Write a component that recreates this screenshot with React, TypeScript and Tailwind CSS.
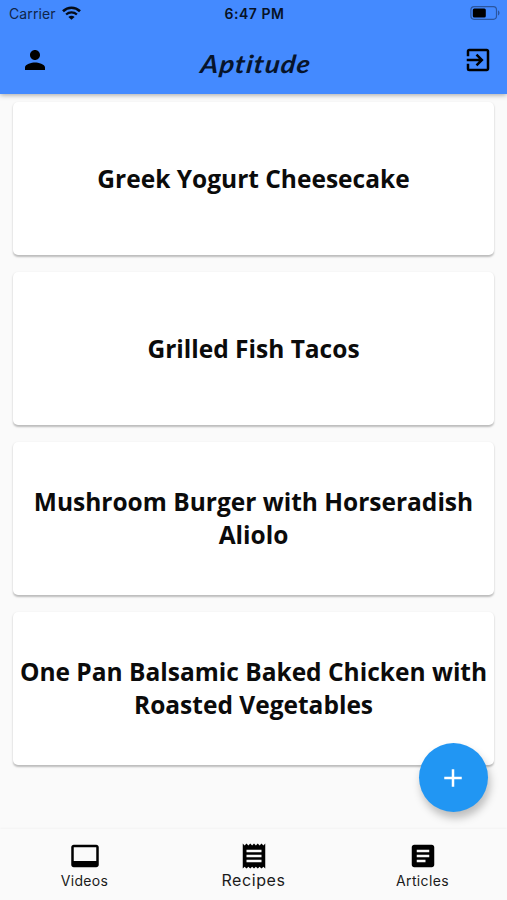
import type { ReactNode } from 'react';
import {
    MdAdd,
    MdArticle,
    MdExitToApp,
    MdPerson,
    MdReceipt,
    MdVideoLabel,
} from 'react-icons/md';

const recipes = [
    'Greek Yogurt Cheesecake',
    'Grilled Fish Tacos',
    'Mushroom Burger with Horseradish Aliolo',
    'One Pan Balsamic Baked Chicken with Roasted Vegetables',
];

function StatusBar() {
    return (
        <div className="flex h-[27px] items-center justify-between pl-[9px] pr-[7px]">
            <div className="flex flex-1 items-center gap-[6px]">
                <span className="text-[14px] leading-[27px] tracking-[0.1px] text-[#10254a]">Carrier</span>
                <svg className="-mt-[2px] h-[14px] w-[19px]" viewBox="0 0 19 14" fill="none">
                    <path d="M1 5.2C5.8.6 13.2.6 18 5.2" stroke="#050c18" strokeWidth="2.6" />
                    <path d="M4.1 8.5c3.1-2.9 7.7-2.9 10.8 0" stroke="#050c18" strokeWidth="2.3" />
                    <path d="M9.5 13.8 6.4 10.9c1.7-1.5 4.5-1.5 6.2 0z" fill="#050c18" />
                </svg>
            </div>
            <span className="text-[14px] font-semibold leading-[27px] tracking-[0.5px] text-[#071225]">
                6:47 PM
            </span>
            <div className="flex flex-1 justify-end">
                <svg className="-mt-[1px] h-[14px] w-[30px]" viewBox="0 0 30 14">
                    <rect x=".9" y=".7" width="25.6" height="12.6" rx="3.2" fill="none" stroke="#2b569f" strokeWidth="1.2" />
                    <rect x="2.8" y="2.6" width="13" height="8.8" rx="1.5" fill="#000" />
                    <path d="M28 4.6c2 .6 2 4.2 0 4.8z" fill="#2b569f" />
                </svg>
            </div>
        </div>
    );
}

function Header() {
    return (
        <header className="relative z-10 h-[94px] bg-[#448aff] shadow-[0_1px_5px_rgba(0,0,0,0.35)]">
            <StatusBar />
            <div className="flex h-[65px] items-center justify-between pl-5 pr-[14px]">
                <button aria-label="Profile">
                    <MdPerson size={30} />
                </button>
                <h1 className="mt-[6px] -skew-x-6 scale-x-110 font-['Segoe_Print','Bradley_Hand','Lato',cursive] text-[25px] font-bold italic leading-8 tracking-[0.9px] text-[#07142b]">
                    Aptitude
                </h1>
                <button aria-label="Log out">
                    <MdExitToApp size={30} />
                </button>
            </div>
        </header>
    );
}

function RecipeCard({ title }: { title: string }) {
    return (
        <div className="flex h-[153px] items-center justify-center rounded-[5px] bg-white pb-[1px] text-center shadow-[0_1.5px_2px_rgba(0,0,0,0.25)]">
            <h2 className="font-['Open_Sans',sans-serif] text-[24.5px] font-bold leading-[33px] text-[#0b0b0b]">
                {title}
            </h2>
        </div>
    );
}

function Tab({ icon, label, active = false }: { icon: ReactNode; label: string; active?: boolean }) {
    return (
        <button className="flex flex-1 flex-col items-center pt-3 text-black">
            {icon}
            {active ? (
                <span className="-mt-[1px] text-[16px] leading-5 tracking-[0.6px] text-[#1b1b1b]">{label}</span>
            ) : (
                <span className="text-[14px] leading-5 tracking-[0.35px] text-[#1b1b1b]">{label}</span>
            )}
        </button>
    );
}

export default function App() {
    return (
        <div className="relative flex h-[900px] w-[507px] flex-col overflow-hidden bg-[#fafafa] font-['Inter',sans-serif]">
            <Header />

            <main className="flex flex-1 flex-col gap-[17px] px-[13px] pt-2">
                {recipes.map((title) => (
                    <RecipeCard key={title} title={title} />
                ))}
            </main>

            {/* Floating action button */}
            <button
                aria-label="Add recipe"
                className="absolute right-[19px] top-[743px] flex size-[69px] items-center justify-center rounded-full bg-[#2196f3] pr-[1px] text-white shadow-[2px_6px_9px_rgba(0,0,0,0.25)]"
            >
                <MdAdd size={30} />
            </button>

            <nav className="flex h-[71px] shadow-[0_-1px_2px_rgba(0,0,0,0.03)]">
                <Tab icon={<MdVideoLabel size={30} />} label="Videos" />
                <Tab icon={<MdReceipt size={30} />} label="Recipes" active />
                <Tab icon={<MdArticle size={30} />} label="Articles" />
            </nav>
        </div>
    );
}
